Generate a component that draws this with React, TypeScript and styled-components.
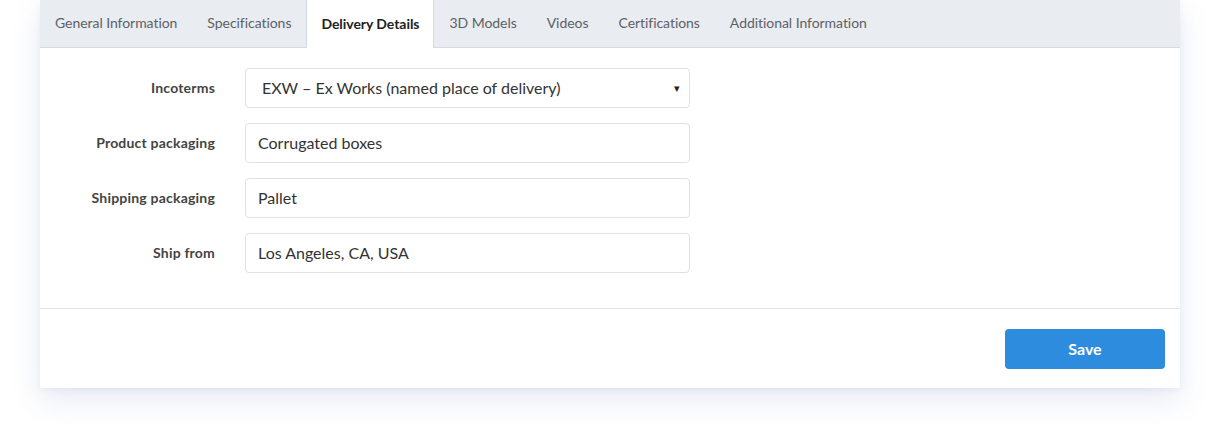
import React from "react";
import styled, { createGlobalStyle } from "styled-components";

const Global = createGlobalStyle`
  html, body { margin: 0; padding: 0; background: #ffffff; }
  body { font-family: "Lato", "Open Sans", Arial, sans-serif; }
  * { box-sizing: border-box; }
`;

const Page = styled.div`
  padding: 0 28px 36px 40px;
  width: 1208px;
`;

const Card = styled.div`
  width: 1140px;
  background: #fff;
  box-shadow: 0 12px 28px rgba(70, 90, 170, 0.13), 0 2px 6px rgba(70, 90, 170, 0.06);
`;

const TabBar = styled.div`
  display: flex;
  height: 48px;
  background: #e9ecf0;
  border-bottom: 1px solid #d6dadf;
`;

const Tab = styled.div<{ $active?: boolean }>`
  display: flex;
  align-items: center;
  padding: 0 14px 2px;
  height: ${(p) => (p.$active ? "48px" : "47px")};
  font-size: 14px;
  letter-spacing: -0.05px;
  color: ${(p) => (p.$active ? "#222" : "#5d6166")};
  font-weight: ${(p) => (p.$active ? 700 : 400)};
  background: ${(p) => (p.$active ? "#fff" : "transparent")};
  border-left: 1px solid ${(p) => (p.$active ? "#d6dadf" : "transparent")};
  border-right: 1px solid ${(p) => (p.$active ? "#d6dadf" : "transparent")};
  margin-bottom: ${(p) => (p.$active ? "-1px" : "0")};
  position: relative;
  z-index: 1;
`;

const Form = styled.div`
  display: flex;
  flex-direction: column;
  gap: 15px;
  padding: 20px 0 35px;
  border-bottom: 1px solid #e2e4e8;
`;

const Row = styled.div`
  display: grid;
  grid-template-columns: 175px 445px;
  column-gap: 30px;
  align-items: center;
`;

const Label = styled.label`
  text-align: right;
  font-size: 14px;
  letter-spacing: 0.2px;
  font-weight: 700;
  color: #444;
  padding-bottom: 2px;
`;

const Field = styled.div`
  height: 40px;
  border: 1px solid #dde1e6;
  border-radius: 4px;
  display: flex;
  align-items: center;
  justify-content: space-between;
  padding: 0 9px 1px 12px;
  font-size: 16px;
  color: #333;
`;

const SelectText = styled.span`
  padding-left: 4px;
`;

const Caret = styled.span`
  font-size: 11px;
  color: #222;
`;

const Footer = styled.div`
  display: flex;
  justify-content: flex-end;
  padding: 20px 15px 19px;
`;

const SaveButton = styled.button`
  width: 160px;
  height: 40px;
  border: none;
  border-radius: 4px;
  background: #2d8cdd;
  color: #fff;
  font-family: inherit;
  font-size: 16px;
  font-weight: 700;
  padding-bottom: 2px;
`;

const tabs = [
  "General Information",
  "Specifications",
  "Delivery Details",
  "3D Models",
  "Videos",
  "Certifications",
  "Additional Information",
];

export default function App() {
  return (
    <>
      <Global />
      <Page>
        <Card>
          <TabBar>
            {tabs.map((t) => (
              <Tab key={t} $active={t === "Delivery Details"}>
                {t}
              </Tab>
            ))}
          </TabBar>
          <Form>
            <Row>
              <Label>Incoterms</Label>
              <Field>
                <SelectText>EXW – Ex Works (named place of delivery)</SelectText>
                <Caret>▾</Caret>
              </Field>
            </Row>
            <Row>
              <Label>Product packaging</Label>
              <Field>Corrugated boxes</Field>
            </Row>
            <Row>
              <Label>Shipping packaging</Label>
              <Field>Pallet</Field>
            </Row>
            <Row>
              <Label>Ship from</Label>
              <Field>Los Angeles, CA, USA</Field>
            </Row>
          </Form>
          <Footer>
            <SaveButton>Save</SaveButton>
          </Footer>
        </Card>
      </Page>
    </>
  );
}
